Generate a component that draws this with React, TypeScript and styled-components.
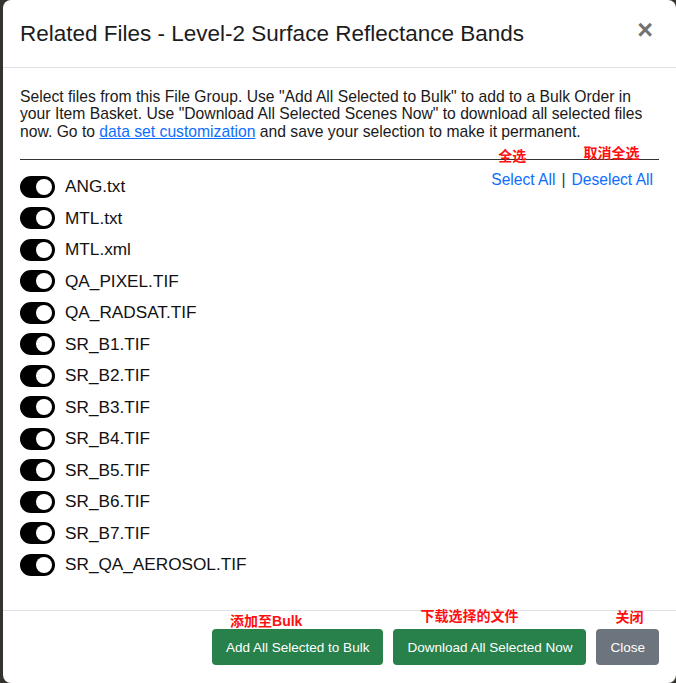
import React from "react";
import styled, { createGlobalStyle } from "styled-components";

const GlobalStyle = createGlobalStyle`
  html, body { margin: 0; padding: 0; }
  body {
    background: #34332f;
    font-family: "Liberation Sans", Arial, sans-serif;
    color: #212529;
  }
  * { box-sizing: border-box; }
`;

const Modal = styled.div`
  margin-left: 3px;
  width: 673px;
  height: 683px;
  background: #fff;
  border-radius: 8px;
  display: flex;
  flex-direction: column;
  overflow: hidden;
`;

const Header = styled.div`
  height: 68px;
  flex: none;
  border-bottom: 1px solid #dee2e6;
  padding: 0 17px;
  display: flex;
  align-items: center;
  justify-content: space-between;
`;

const Title = styled.h5`
  margin: 0;
  font-size: 22.5px;
  font-weight: 400;
  line-height: 26px;
  color: #1c1c1c;
`;

const CloseX = styled.button`
  border: 0;
  background: none;
  padding: 0;
  margin: -6px 6px 0 0;
  font-family: "Liberation Sans", Arial, sans-serif;
  font-size: 27px;
  font-weight: 700;
  line-height: 1;
  color: #727272;
  cursor: pointer;
`;

const Body = styled.div`
  flex: 1;
  padding: 19.5px 17px 0;
`;

const Intro = styled.p`
  margin: 0 0 18.5px;
  font-size: 15.7px;
  line-height: 17.5px;
  color: #1a1a1a;
`;

const Link = styled.a`
  color: #0d6efd;
  text-decoration: underline;
  line-height: 1;
  cursor: pointer;
`;

const PlainLink = styled.span`
  color: #0d6efd;
  cursor: pointer;
`;

const Rule = styled.hr`
  margin: 0;
  border: 0;
  border-top: 1px solid #333;
`;

const Content = styled.div`
  display: flex;
  justify-content: space-between;
  align-items: flex-start;
  margin-top: 11.5px;
`;

const FileList = styled.ul`
  list-style: none;
  margin: 0;
  padding: 0;
`;

const FileRow = styled.li`
  height: 31.5px;
  display: flex;
  align-items: center;
  gap: 10px;
`;

const Switch = styled.span<{ $on: boolean }>`
  position: relative;
  width: 35px;
  height: 22px;
  border-radius: 11px;
  background: ${(p) => (p.$on ? "#000" : "#fff")};
  border: 2px solid #000;
  flex: none;
  &::after {
    content: "";
    position: absolute;
    top: 1px;
    ${(p) => (p.$on ? "right: 1px;" : "left: 1px;")}
    width: 16px;
    height: 16px;
    border-radius: 50%;
    background: ${(p) => (p.$on ? "#fff" : "#000")};
  }
`;

const FileName = styled.span`
  font-size: 17.2px;
  color: #111;
`;

const Actions = styled.div`
  display: flex;
  align-items: center;
  gap: 6px;
  font-size: 15.6px;
  line-height: 18px;
  margin-right: 6px;
`;

const Sep = styled.span`
  color: #333;
`;

const Anchor = styled.span`
  position: relative;
  display: inline-block;
`;

const Note = styled.span<{ $top: number; $left: number }>`
  position: absolute;
  top: ${(p) => p.$top}px;
  left: ${(p) => p.$left}px;
  white-space: nowrap;
  color: #ff1010;
  font-family: "Liberation Sans", "Noto Sans CJK SC", sans-serif;
  font-weight: 700;
  font-size: 14px;
  line-height: 16px;
  pointer-events: none;
`;

const Footer = styled.div`
  flex: none;
  border-top: 1px solid #dee2e6;
  padding: 18px 17px;
  display: flex;
  justify-content: flex-end;
  gap: 10px;
`;

const Button = styled.button<{ $variant: "success" | "secondary" }>`
  position: relative;
  height: 36px;
  padding: 0 14px;
  border: 0;
  border-radius: 4px;
  background: ${(p) => (p.$variant === "success" ? "#28814a" : "#6c757d")};
  color: #fff;
  font-family: "Liberation Sans", Arial, sans-serif;
  font-size: 13.5px;
  cursor: pointer;
`;

const files = [
  "ANG.txt",
  "MTL.txt",
  "MTL.xml",
  "QA_PIXEL.TIF",
  "QA_RADSAT.TIF",
  "SR_B1.TIF",
  "SR_B2.TIF",
  "SR_B3.TIF",
  "SR_B4.TIF",
  "SR_B5.TIF",
  "SR_B6.TIF",
  "SR_B7.TIF",
  "SR_QA_AEROSOL.TIF",
];

export default function App() {
  return (
    <>
      <GlobalStyle />
      <Modal>
        <Header>
          <Title>Related Files - Level-2 Surface Reflectance Bands</Title>
          <CloseX aria-label="Close">×</CloseX>
        </Header>
        <Body>
          <Intro>
            Select files from this File Group. Use "Add All Selected to Bulk" to add to a Bulk Order in
            your Item Basket. Use "Download All Selected Scenes Now" to download all selected files
            now. Go to <Link>data set customization</Link> and save your selection to make it permanent.
          </Intro>
          <Rule />
          <Content>
            <FileList>
              {files.map((f) => (
                <FileRow key={f}>
                  <Switch $on />
                  <FileName>{f}</FileName>
                </FileRow>
              ))}
            </FileList>
            <Actions>
              <Anchor>
                <PlainLink>Select All</PlainLink>
                <Note $top={-23} $left={7}>全选</Note>
              </Anchor>
              <Sep>|</Sep>
              <Anchor>
                <PlainLink>Deselect All</PlainLink>
                <Note $top={-26} $left={12}>取消全选</Note>
              </Anchor>
            </Actions>
          </Content>
        </Body>
        <Footer>
          <Button $variant="success">
            Add All Selected to Bulk
            <Note $top={-16} $left={18}>添加至Bulk</Note>
          </Button>
          <Button $variant="success">
            Download All Selected Now
            <Note $top={-21} $left={27}>下载选择的文件</Note>
          </Button>
          <Button $variant="secondary">
            Close
            <Note $top={-20} $left={19}>关闭</Note>
          </Button>
        </Footer>
      </Modal>
    </>
  );
}
